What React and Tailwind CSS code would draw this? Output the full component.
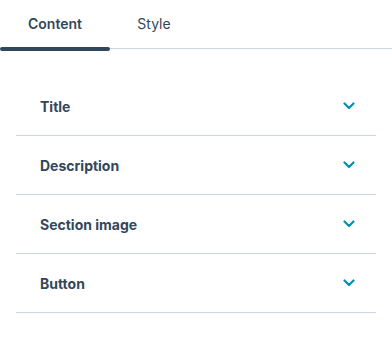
import React, { useState } from "react";

const sections = ["Title", "Description", "Section image", "Button"];

const Chevron = () => (
  <svg width="12" height="8" viewBox="0 0 12 8" fill="none">
    <path
      d="M1.5 1.5L6 6L10.5 1.5"
      stroke="#0091ae"
      strokeWidth="2.2"
      strokeLinecap="round"
      strokeLinejoin="round"
    />
  </svg>
);

const App = () => {
  const [tab, setTab] = useState("Content");

  return (
    <div
      className="w-[392px] h-[340px] bg-white text-[#33475b]"
      style={{ fontFamily: "Inter, 'Noto Sans', sans-serif" }}
    >
      {/* Tabs */}
      <div className="relative flex h-[49px] border-b border-[#cbd6e2]">
        {["Content", "Style"].map((t) => (
          <button
            key={t}
            onClick={() => setTab(t)}
            className={`relative flex items-center justify-center pb-[1px] text-[14px] ${
              t === "Content" ? "w-[110px]" : "w-[88px]"
            } ${tab === t ? "font-semibold" : "font-normal"}`}
          >
            {t}
            {tab === t && (
              <span className="absolute left-0 right-0 top-[47px] h-[4px] rounded-full bg-[#33475b]" />
            )}
          </button>
        ))}
      </div>

      {/* Sections */}
      <div className="px-4 pt-[28px]">
        {sections.map((s) => (
          <div
            key={s}
            className="flex h-[59px] items-center justify-between border-b border-[#cbd6e2] pl-6 pr-[21px]"
          >
            <span className="text-[14px] font-bold">{s}</span>
            <Chevron />
          </div>
        ))}
      </div>
    </div>
  );
};

export default App;
